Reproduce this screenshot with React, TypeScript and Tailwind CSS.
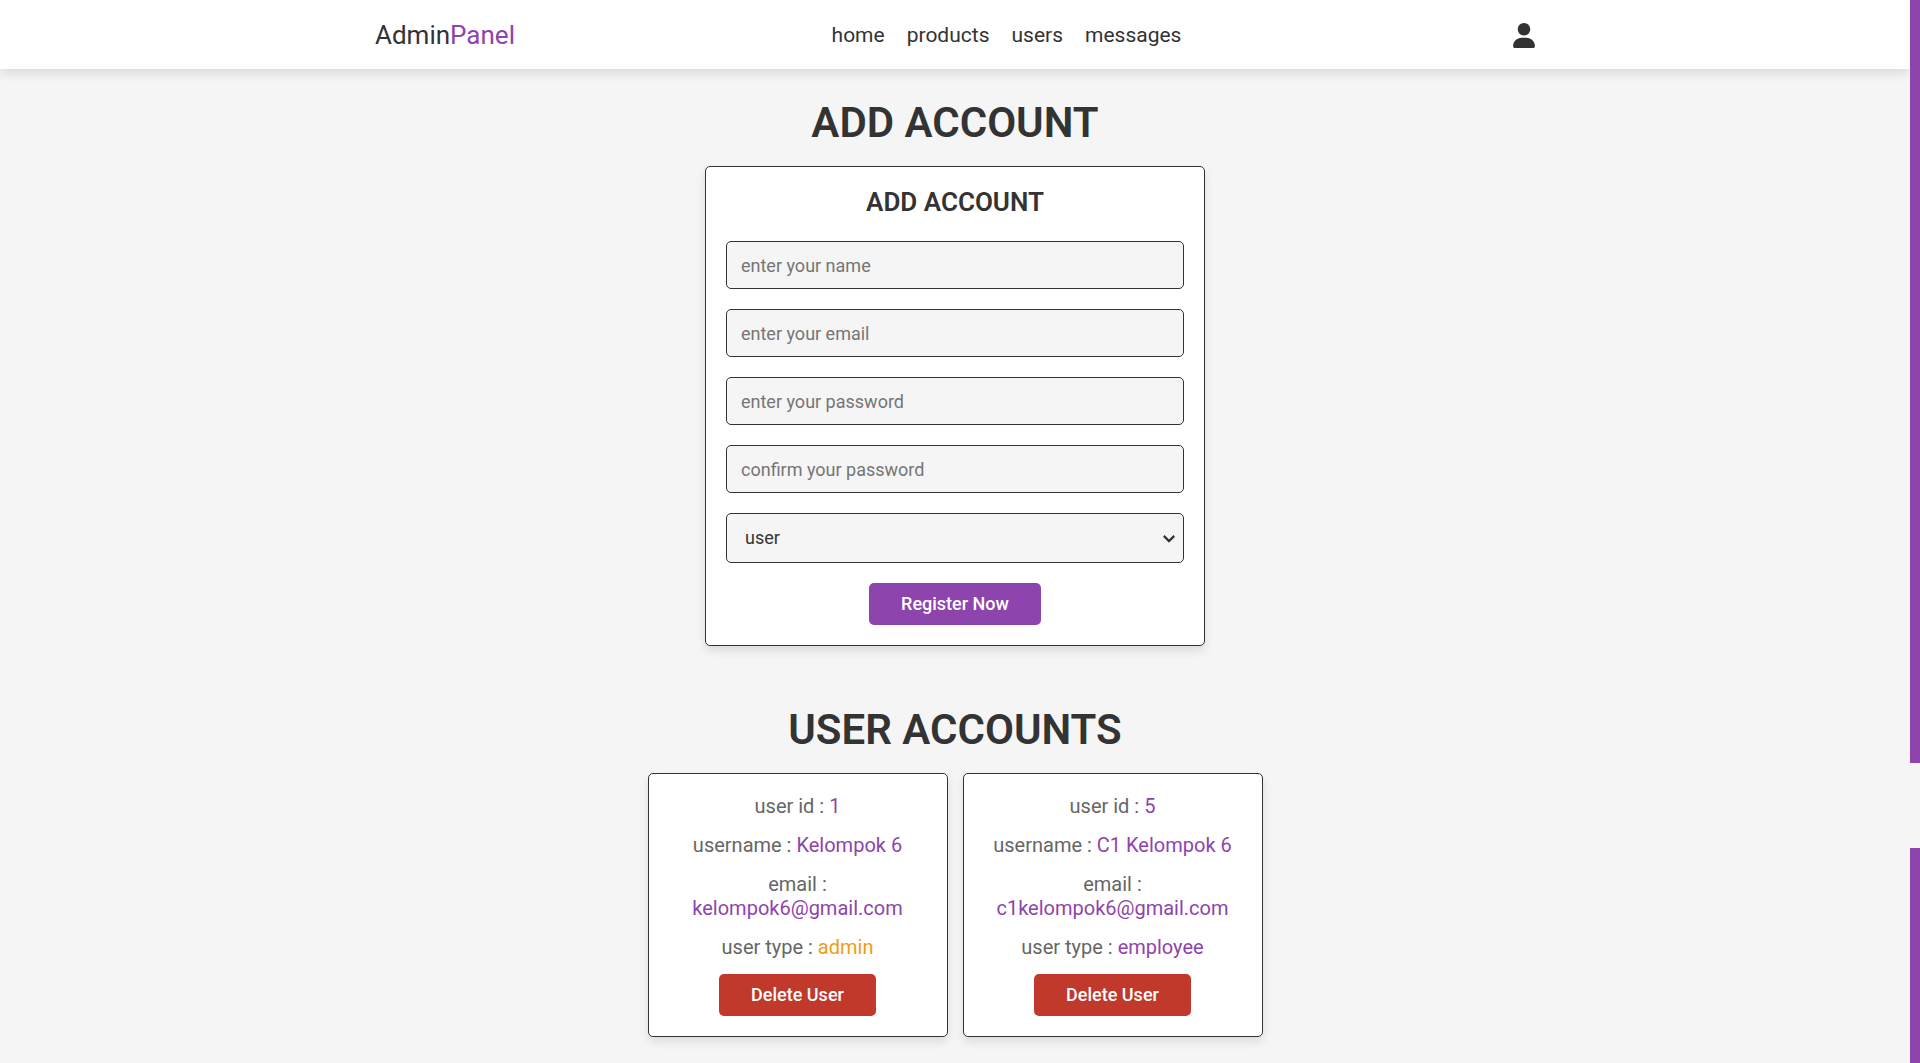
import React from 'react';

type Account = { id: string; name: string; email: string; type: string };

const links = ['home', 'products', 'users', 'messages'];

const fields = [
  { name: 'name', type: 'text', label: 'enter your name' },
  { name: 'email', type: 'email', label: 'enter your email' },
  { name: 'pass', type: 'password', label: 'enter your password' },
  { name: 'cpass', type: 'password', label: 'confirm your password' },
];

const accounts: Account[] = [
  { id: '1', name: 'Kelompok 6', email: 'kelompok6@gmail.com', type: 'admin' },
  { id: '5', name: 'C1 Kelompok 6', email: 'c1kelompok6@gmail.com', type: 'employee' },
];

function Header() {
  return (
    <header className="relative bg-white shadow-[0_5px_10px_rgba(0,0,0,0.1)]">
      <div className="mx-auto flex max-w-[1200px] items-center justify-between px-5 pt-5 pb-[19px] leading-[30px]">
        <a href="#" className="text-[26px]">
          Admin<span className="text-[#8e44ad]">Panel</span>
        </a>
        <nav className="flex gap-[22px] text-[21px]">
          {links.map((link) => (
            <a key={link} href={'#' + link}>
              {link}
            </a>
          ))}
        </nav>
        <button type="button" aria-label="account" className="pl-[15px]">
          <svg viewBox="0 0 448 512" className="block h-[25px] w-[22px]" fill="currentColor" aria-hidden="true">
            <path d="M224 256c70.7 0 128-57.3 128-128S294.7 0 224 0 96 57.3 96 128s57.3 128 128 128zm50.700 48H173.300C77.610 304 0 381.600 0 477.300 0 496.500 15.520 512 34.660 512H413.300C432.500 512 448 496.500 448 477.300 448 381.600 370.400 304 274.700 304z" />
          </svg>
        </button>
      </div>
    </header>
  );
}

function Title({ children }: { children: React.ReactNode }) {
  return <h1 className="mb-5 text-center text-[42px] leading-[47px] font-semibold uppercase">{children}</h1>;
}

const card = 'rounded-[5px] border border-[#333333] bg-white p-5 text-center shadow-[0_5px_10px_rgba(0,0,0,0.1)]';
const box = 'mb-5 w-full rounded-[5px] border border-[#333333] bg-[#f5f5f5] text-lg text-[#333333]';

function AccountForm() {
  return (
    <form className={card + ' mx-auto max-w-[500px]'} onSubmit={(e) => e.preventDefault()}>
      <h3 className="mb-6 text-[26px] leading-[30px] font-semibold uppercase">add account</h3>
      {fields.map((field) => (
        <input
          key={field.name}
          name={field.name}
          type={field.type}
          placeholder={field.label}
          aria-label={field.label}
          className={box + ' block h-12 px-[14px] placeholder:text-[#757575]'}
        />
      ))}
      <div className="relative">
        <select name="user_type" aria-label="user type" className={box + ' block h-[50px] appearance-none px-[18px]'}>
          <option>user</option>
          <option>employee</option>
          <option>admin</option>
        </select>
        <svg
          viewBox="0 0 12 8"
          className="pointer-events-none absolute top-[22px] right-[9px] h-2 w-3"
          fill="none"
          stroke="currentColor"
          strokeWidth="2.2"
          aria-hidden="true"
        >
          <path d="M0.800 0.900 6 6.100 11.200 0.900" />
        </svg>
      </div>
      <button type="submit" className="h-[42px] rounded-[5px] bg-[#8e44ad] px-8 text-lg font-medium text-white">
        Register Now
      </button>
    </form>
  );
}

function AccountCard({ account }: { account: Account }) {
  return (
    <article className={card + ' flex w-[300px] flex-col items-center gap-[15px] text-xl leading-6 text-[#666666]'}>
      <p>
        user id : <span className="text-[#8e44ad]">{account.id}</span>
      </p>
      <p>
        username : <span className="text-[#8e44ad]">{account.name}</span>
      </p>
      <p>
        email : <span className="text-[#8e44ad]">{account.email}</span>
      </p>
      <p>
        user type :{' '}
        <span className={account.type === 'admin' ? 'text-[#f39c12]' : 'text-[#8e44ad]'}>{account.type}</span>
      </p>
      <button type="button" className="h-[42px] rounded-[5px] bg-[#c0392b] px-8 text-lg font-medium text-white">
        Delete User
      </button>
    </article>
  );
}

export default function App() {
  return (
    <div className="flex min-h-screen bg-[#f5f5f5] font-['Roboto',sans-serif] text-[#333333]">
      <div className="min-w-0 flex-1">
        <Header />
        <main>
          <section className="px-5 py-[30px]">
            <Title>add account</Title>
            <AccountForm />
          </section>
          <section className="px-5 pt-[30px] pb-5">
            <Title>user accounts</Title>
            <div className="flex flex-wrap justify-center gap-[15px]">
              {accounts.map((account) => (
                <AccountCard key={account.id} account={account} />
              ))}
            </div>
          </section>
        </main>
      </div>
      <div className="relative flex w-2.5 shrink-0 flex-col" aria-hidden="true">
        <div className="grow-[763] bg-[#8e44ad]" />
        <div className="grow-[85] bg-[#f5f5f5]" />
        <div className="grow-[215] bg-[#8e44ad]" />
      </div>
    </div>
  );
}
